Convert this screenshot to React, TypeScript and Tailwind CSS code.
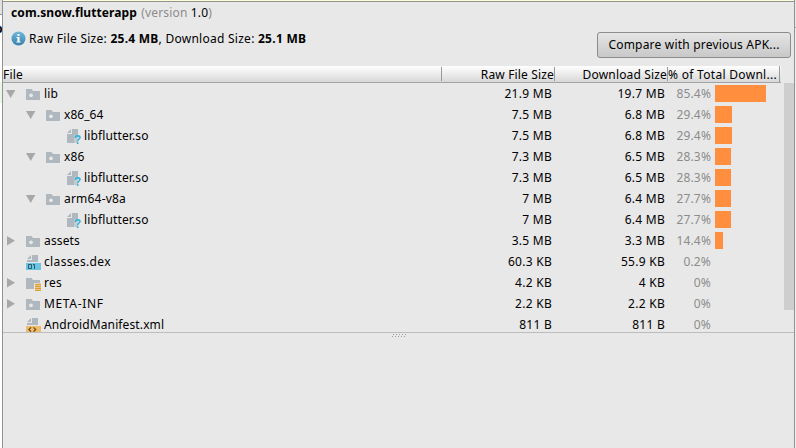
import React from "react";

type IconKind = "folder" | "resFolder" | "unknown" | "dex" | "xml";
type Row = {
  name: string;
  depth: number;
  icon: IconKind;
  open?: boolean;
  raw: string;
  download: string;
  percent: string;
  bar: number;
  tracking: string;
};

const rows: Row[] = [
  { name: "lib", depth: 0, icon: "folder", open: true, raw: "21.9 MB", download: "19.7 MB", percent: "85.4%", bar: 51, tracking: "tracking-[0.1px]" },
  { name: "x86_64", depth: 1, icon: "folder", open: true, raw: "7.5 MB", download: "6.8 MB", percent: "29.4%", bar: 17, tracking: "tracking-[0.05px]" },
  { name: "libflutter.so", depth: 2, icon: "unknown", raw: "7.5 MB", download: "6.8 MB", percent: "29.4%", bar: 17, tracking: "tracking-[0.13px]" },
  { name: "x86", depth: 1, icon: "folder", open: true, raw: "7.3 MB", download: "6.5 MB", percent: "28.3%", bar: 16, tracking: "tracking-[0.1px]" },
  { name: "libflutter.so", depth: 2, icon: "unknown", raw: "7.3 MB", download: "6.5 MB", percent: "28.3%", bar: 16, tracking: "tracking-[0.13px]" },
  { name: "arm64-v8a", depth: 1, icon: "folder", open: true, raw: "7 MB", download: "6.4 MB", percent: "27.7%", bar: 16, tracking: "tracking-[0.2px]" },
  { name: "libflutter.so", depth: 2, icon: "unknown", raw: "7 MB", download: "6.4 MB", percent: "27.7%", bar: 16, tracking: "tracking-[0.13px]" },
  { name: "assets", depth: 0, icon: "folder", open: false, raw: "3.5 MB", download: "3.3 MB", percent: "14.4%", bar: 8, tracking: "tracking-[0.15px]" },
  { name: "classes.dex", depth: 0, icon: "dex", raw: "60.3 KB", download: "55.9 KB", percent: "0.2%", bar: 0, tracking: "tracking-[0.35px]" },
  { name: "res", depth: 0, icon: "resFolder", open: false, raw: "4.2 KB", download: "4 KB", percent: "0%", bar: 0, tracking: "tracking-[0.2px]" },
  { name: "META-INF", depth: 0, icon: "folder", open: false, raw: "2.2 KB", download: "2.2 KB", percent: "0%", bar: 0, tracking: "tracking-[0.65px]" },
  { name: "AndroidManifest.xml", depth: 0, icon: "xml", raw: "811 B", download: "811 B", percent: "0%", bar: 0, tracking: "tracking-[0.12px]" },
];

function Arrow({ open }: { open?: boolean }) {
  return (
    <svg className="h-4 w-4 shrink-0" viewBox="0 0 16 16" fill="#a8a8a8">
      {open === true && <path d="M3 4h9.400L7.700 12z" />}
      {open === false && <path d="M4 3v9.500l8-4.750z" />}
    </svg>
  );
}

function FileIcon({ kind }: { kind: IconKind }) {
  if (kind === "folder" || kind === "resFolder") {
    return (
      <svg className="h-4 w-4 shrink-0" viewBox="0 0 16 16">
        <path d="M1 3h5.500l1.500 2h7v9H1z" fill="#afb8bf" />
        {kind === "folder" ? (
          <circle cx="6" cy="9.300" r="1.900" fill="#e8e8e8" />
        ) : (
          <>
            <path d="M9 8h7v8H9z" fill="#e8e8e8" />
            <path d="M10 8.800h6v1.400h-6zM10 10.800h6v1.400h-6zM10 12.800h6v1.400h-6zM10 14.700h6v1.300h-6z" fill="#e0a030" />
          </>
        )}
      </svg>
    );
  }
  return (
    <svg className="h-4 w-4 shrink-0" viewBox="0 0 16 16">
      <path d="M6 1v4H2z" fill="#afb8bf" />
      <path d="M7 1h6v14H2V6h5z" fill="#afb8bf" />
      {kind === "unknown" && (
        <>
          <path d="M9 7h7v9H9z" fill="#e8e8e8" fillOpacity=".4" />
          <path d="M10.500 10V8.800C11 7.600 15 7.300 15 9.500c0 1.500-2.300 1.600-2.300 3.800M12.700 14.300V16" stroke="#2fb3dc" strokeWidth="1.600" fill="none" />
        </>
      )}
      {kind === "dex" && (
        <>
          <path d="M1 8h15v8H1z" fill="#e8e8e8" />
          <path d="M1 9h15v7H1z" fill="#6bc5e2" />
          <path d="M3.500 10.500h3v4h-3zM8 10.500h1.500V15" stroke="#285b6d" fill="none" />
        </>
      )}
      {kind === "xml" && (
        <>
          <path d="M1 8h15v8H1z" fill="#e8e8e8" />
          <path d="M1 9h15v7H1z" fill="#eebb68" />
          <path d="M6 10.300L3.800 12.500l2.200 2.200M8.500 10.300l2.200 2.200-2.200 2.200" stroke="#684c20" strokeWidth="1.200" fill="none" />
        </>
      )}
    </svg>
  );
}

const indents = ["pl-0", "pl-5", "pl-10"];

export default function App() {
  return (
    <div className="flex h-[448px] w-[796px] overflow-hidden whitespace-pre bg-[#e8e8e8] font-['Noto_Sans','Open_Sans',sans-serif] text-[12px] leading-[21px] text-black">
      <aside className="h-full w-[2px] shrink-0 overflow-hidden bg-white">
        <div className="h-[15px] border-b border-[#999] bg-[#e0e0e0]" />
        <div className="mt-[3px] h-[21px] w-[2px] overflow-hidden font-bold">
          <div className="ml-[-5px] w-2">p</div>
        </div>
        <div className="mt-[43px] h-[21px] bg-[#eaf7e4]" />
      </aside>
      <main className="flex h-full w-[793px] shrink-0 flex-col border-x border-[#929292]">
        <div className="h-[2px] shrink-0 border-b border-[#929292] bg-[#ffffd7]" />
        <header className="flex h-[64px] shrink-0 justify-between pl-2">
          <div>
            <div className="h-[22px] tracking-[0.16px] text-[#8c8c8c]">
              <b className="mr-px tracking-[0.1px] text-black">com.snow.flutterapp</b> (version <span className="text-black">1.0</span>)
            </div>
            <div className="mt-1 flex h-[21px] items-center">
              <svg className="mr-[3px] h-[15px] w-[15px]" viewBox="0 0 15 15">
                <defs><linearGradient id="blue" x2="0" y2="1"><stop stopColor="#72b8dc" /><stop offset="1" stopColor="#3981ad" /></linearGradient></defs>
                <circle cx="7.500" cy="7.500" r="7" fill="url(#blue)" />
                <path d="M6.500 3h2v2h-2zM5.500 6h3v4.500h1v1h-4v-1h1V7h-1z" fill="white" />
              </svg>
              <span className="tracking-[0.26px]">Raw File Size: <b>25.4 MB</b>, Download Size: <b>25.1 MB</b></span>
            </div>
          </div>
          <button className="mr-[3px] mt-[30px] h-[26px] w-[194px] rounded-[3px] border border-[#8c8c8c] bg-linear-to-b from-[#e5e5e5] to-[#c8c8c8] leading-[24px] tracking-[0.2px]">Compare with previous APK...</button>
        </header>
        <div className="flex h-[17px] w-[778px] shrink-0 border-b border-[#a3a3a3] bg-linear-to-b from-white to-[#d8d8d8] leading-[17px] tracking-[0.16px]">
          <div className="mt-px h-[14px] w-[439px] border-r border-[#999] leading-[15px]">File</div>
          <div className="mt-px h-[14px] w-[113px] border-r border-[#999] text-right leading-[15px]">Raw File Size</div>
          <div className="mt-px h-[14px] w-[113px] border-r border-[#999] text-right leading-[15px]">Download Size</div>
          <div className="h-[16px] w-[112px] border-r border-[#999] tracking-[0.3px]">% of Total Downl...</div>
        </div>
        <section className="flex h-[250px] shrink-0 overflow-hidden border-b border-[#bdbdbd]">
          <div className="w-[781px]">
            {rows.map((row, i) => (
              <div className="flex h-[21px]" key={i}>
                <div className={"flex w-[439px] items-start " + indents[row.depth]}>
                  <span className="mt-[3px] flex"><Arrow open={row.open} /></span>
                  <span className="ml-[6px] mr-[3px] mt-[3px] flex"><FileIcon kind={row.icon} /></span>
                  <span className={row.tracking}>{row.name}</span>
                </div>
                <div className="w-[110px] text-right tracking-[0.27px]">{row.raw}</div>
                <div className="w-[113px] text-right tracking-[0.27px]">{row.download}</div>
                <div className="w-[46px] text-right tracking-[0.15px] text-[#8c8c8c]">{row.percent}</div>
                <div className="ml-1 mt-[2px] h-[17px] bg-[#ff8f3f]" style={{ width: row.bar }} />
              </div>
            ))}
          </div>
          <div className="h-[227px] w-[10px] bg-[#cecece]" />
        </section>
        <div className="flex h-[7px] items-center justify-center">
          <svg className="h-[5px] w-4" viewBox="0 0 16 5" fill="#a0a0a0"><path d="M2 0h1v1H2zM5 0h1v1H5zM8 0h1v1H8zM11 0h1v1h-1zM14 0h1v1h-1zM1 2h1v1H1zM4 2h1v1H4zM7 2h1v1H7zM10 2h1v1h-1zM13 2h1v1h-1z" /></svg>
        </div>
      </main>
      <aside className="h-full w-px bg-[#efefef]">
        <div className="h-[28px] border-b border-[#aaa] bg-[#e8e8e8]" />
      </aside>
    </div>
  );
}
